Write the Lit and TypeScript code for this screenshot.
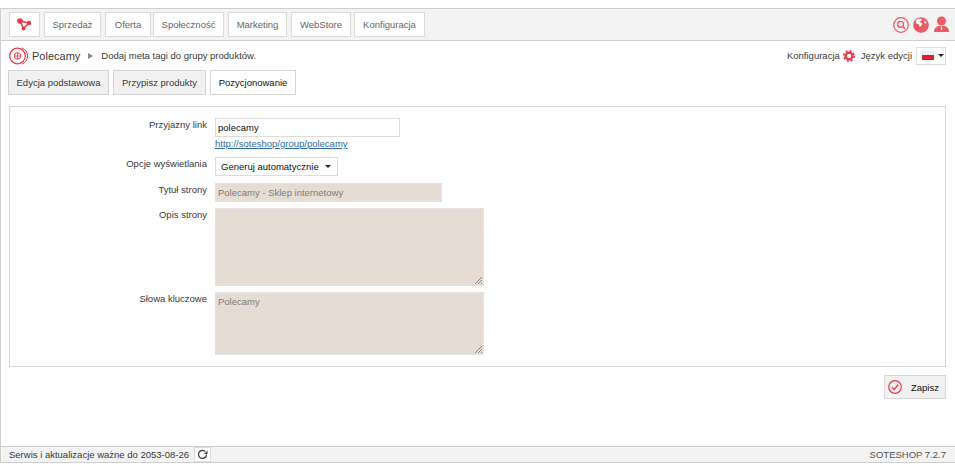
import { LitElement, html, css } from "lit";
import { customElement } from "lit/decorators.js";

const RED = "#e8394a";
const SOFT = "#ec5a66";

@customElement("app-root")
export class AppRoot extends LitElement {
  static styles = css`
    :host { display: block; width: 955px; height: 465px; background: #fff; font-family: "Liberation Sans", Arial, sans-serif; font-size: 9.5px; color: #3a3a3a; overflow: hidden; }
    * { box-sizing: border-box; }
    .frame { margin-top: 8px; height: 455px; display: flex; flex-direction: column; border-left: 1px solid #cfcfcf; border-top: 1px solid #cfcfcf; border-bottom: 1px solid #cfcfcf; }
    .top { height: 32px; flex: none; background: #f3f3f3; border-bottom: 1px solid #cfcfcf; display: flex; align-items: flex-start; padding: 3px 0 0 8px; }
    .nav { display: flex; }
    .nb { height: 25px; background: #fff; border: 1px solid #dcdcdc; display: flex; align-items: center; justify-content: center; color: #666; }
    .icons { margin-left: auto; display: flex; align-items: center; gap: 4px; padding: 4px 6px 0 0; }
    .crumb { height: 29px; flex: none; display: flex; align-items: center; padding: 0 9px 0 8px; }
    .crumb .title { font-size: 11px; color: #3a3a3a; margin-left: 2px; }
    .crumb .arrow { width: 0; height: 0; border-left: 5px solid #888; border-top: 3px solid transparent; border-bottom: 3px solid transparent; margin: 0 8px 0 8px; }
    .crumb .right { margin-left: auto; display: flex; align-items: center; }
    .flag { width: 30px; height: 18px; margin-left: 4px; border: 1px solid #ddd; background: #fff; display: flex; align-items: center; padding-left: 5px; gap: 4px; }
    .flag i { display: block; width: 12px; height: 9px; background: linear-gradient(#f0f0f0 45%, #dd2030 45%); }
    .caret { width: 0; height: 0; border: 3px solid transparent; border-top: 3px solid #222; border-bottom: 0; flex: none; }
    .tabs { display: flex; gap: 4px; padding-left: 7px; flex: none; height: 25px; }
    .tab { height: 25px; display: flex; align-items: center; justify-content: center; background: #f1f1f1; border: 1px solid #d5d5d5; color: #3a3a3a; }
    .tab.on { background: #fff; color: #111; }
    .panel { margin: 11px 9px 0 8px; height: 261px; flex: none; border: 1px solid #d5d5d5; padding-top: 11px; }
    .form { display: grid; grid-template-columns: 197px auto; column-gap: 8px; row-gap: 6px; justify-content: start; }
    .lab { text-align: right; color: #3a3a3a; line-height: 13px; }
    .stack { display: flex; flex-direction: column; align-items: flex-start; }
    .in { height: 19px; width: 185px; border: 1px solid #dcdcdc; background: #fff; color: #111; display: flex; align-items: center; padding-left: 2px; }
    .link { color: #2f6a9f; text-decoration: underline; line-height: 13px; margin-bottom: 1px; }
    .sel { height: 19px; width: 123px; border: 1px solid #dcdcdc; background: #fff; color: #111; display: flex; align-items: center; padding-left: 5px; gap: 6px; white-space: nowrap; margin-bottom: 1px; }
    .dis { background: #e5dcd3; border: 1px solid #e3e3e3; color: #808080; padding: 2px; position: relative; line-height: 14px; }
    .t1 { width: 227px; height: 19px; display: flex; align-items: center; }
    .t2 { width: 269px; height: 78px; }
    .t3 { width: 269px; height: 63px; }
    .grip { position: absolute; right: 0; bottom: 0; }
    .actions { display: flex; justify-content: flex-end; padding: 8px 9px 0 0; flex: none; }
    .save { width: 62px; height: 24px; background: #f1f1f1; border: 1px solid #d8d8d8; display: flex; align-items: center; padding-left: 2px; color: #111; gap: 8px; }
    .foot { margin-top: auto; height: 16px; flex: none; background: #f3f3f3; border-top: 1px solid #cfcfcf; display: flex; align-items: center; padding: 0 9px 0 8px; }
    .ref { width: 17px; height: 15px; background: #fff; border: 1px solid #dcdcdc; margin-left: 5px; display: flex; align-items: center; justify-content: center; }
    .ver { margin-left: auto; color: #555; }
  `;

  private grip() {
    return html`<svg class="grip" width="10" height="10" viewBox="0 0 10 10"><path d="M9 2 2 9M9 5 5 9M9 8 8 9" stroke="#888" fill="none"/></svg>`;
  }

  render() {
    const navs: [string, number, number][] = [["Sprzedaż", 57, 4], ["Oferta", 46, 4], ["Społeczność", 71, 2], ["Marketing", 59, 4], ["WebStore", 60, 4], ["Konfiguracja", 71, 3]];
    return html`<div class="frame">
      <div class="top">
        <div class="nav">
          <div class="nb" style="width:31px">
            <svg width="15" height="13" viewBox="0 0 15 13"><path d="M3 3 12 5 6.500 10.500Z" fill="none" stroke="${RED}" stroke-width="1.500"/><circle cx="3" cy="3" r="2.800" fill="${RED}"/><circle cx="12" cy="5" r="2.200" fill="${RED}"/><circle cx="6.500" cy="10.500" r="1.900" fill="${RED}"/></svg>
          </div>
          ${navs.map(([t, w, g]) => html`<div class="nb" style="width:${w}px;margin-left:${g}px">${t}</div>`)}
        </div>
        <div class="icons">
          <svg width="16" height="16" viewBox="0 0 16 16"><circle cx="8" cy="8" r="7.300" fill="none" stroke="${SOFT}" stroke-width="1.200"/><circle cx="7.500" cy="7.300" r="3" fill="none" stroke="${SOFT}" stroke-width="1.300"/><path d="M9.700 9.500 12 11.800" stroke="${SOFT}" stroke-width="1.700"/></svg>
          <svg width="16" height="16" viewBox="0 0 17 17"><circle cx="8.500" cy="8.500" r="8.300" fill="${SOFT}"/><path d="M5 2.500c2-1 4-.5 4.500.5-.5 1.500-2 1-2.500 2.500 1 .5 2.500 0 3 1.500-1 2-1.500 3-3 3.500-.5-1.500-.5-2.500-1.500-3-1.500 0-2.500-1-2.500-2.500S4 3 5 2.500ZM12 4c1 0 2 1 2.500 2.500-1 .5-2 .5-2.500 0-.5-1 0-1.500 0-2.500Z" fill="#fff"/></svg>
          <svg width="15" height="17" viewBox="0 0 15 17" style="margin-left:1px"><circle cx="7.500" cy="5" r="4.500" fill="${SOFT}"/><path d="M0 16c0-3.500 2.500-6 5-6h5c2.500 0 5 2.500 5 6Z" fill="${SOFT}"/><path d="M7.500 10.500v3.500" stroke="#fff" stroke-width="1.200"/></svg>
        </div>
      </div>
      <div class="crumb">
        <svg width="21" height="20" viewBox="0 0 21 20"><circle cx="8.500" cy="10" r="7.800" fill="none" stroke="${RED}" stroke-width="1.200"/><path d="M13 1.800c3.500 1.700 5.500 4.700 5.500 8.200s-2 6.500-5.500 8.200" fill="none" stroke="${RED}" stroke-width="1"/><circle cx="8.500" cy="10" r="3.300" fill="none" stroke="${RED}" stroke-width="1"/><path d="M5.500 10h6M8.500 7v6" stroke="${RED}" stroke-width=".8"/></svg>
        <span class="title">Polecamy</span><span class="arrow"></span><span>Dodaj meta tagi do grupy produktów.</span>
        <div class="right">
          <span>Konfiguracja</span>
          <svg width="12" height="12" viewBox="0 0 12 12" style="margin:0 6px 0 3px"><circle cx="6" cy="6" r="3.400" fill="none" stroke="${RED}" stroke-width="2.400"/><circle cx="6" cy="6" r="5.200" fill="none" stroke="${RED}" stroke-width="1.600" stroke-dasharray="2 2.080"/></svg>
          <span>Język edycji</span>
          <div class="flag"><i></i><span class="caret"></span></div>
        </div>
      </div>
      <div class="tabs">
        <div class="tab" style="width:101px">Edycja podstawowa</div>
        <div class="tab" style="width:93px">Przypisz produkty</div>
        <div class="tab on" style="width:86px">Pozycjonowanie</div>
      </div>
      <div class="panel">
        <div class="form">
          <div class="lab">Przyjazny link</div>
          <div class="stack"><div class="in">polecamy</div><span class="link">http://soteshop/group/polecamy</span></div>
          <div class="lab">Opcje wyświetlania</div>
          <div class="sel">Generuj automatycznie <span class="caret"></span></div>
          <div class="lab">Tytuł strony</div>
          <div class="dis t1">Polecamy - Sklep internetowy</div>
          <div class="lab">Opis strony</div>
          <div class="dis t2">${this.grip()}</div>
          <div class="lab">Słowa kluczowe</div>
          <div class="dis t3">Polecamy${this.grip()}</div>
        </div>
      </div>
      <div class="actions">
        <div class="save">
          <svg width="16" height="16" viewBox="0 0 16 16"><circle cx="8" cy="8" r="6.300" fill="none" stroke="${RED}" stroke-width="1.200"/><path d="M4.800 8.200 7 10.500 11.300 5.500" fill="none" stroke="${RED}" stroke-width="1.200"/></svg>
          <span>Zapisz</span>
        </div>
      </div>
      <div class="foot">
        <span>Serwis i aktualizacje ważne do 2053-08-26</span>
        <div class="ref"><svg width="11" height="11" viewBox="0 0 11 11"><path d="M9.500 5.500a4 4 0 1 1-1.300-3" fill="none" stroke="#444" stroke-width="1.300"/><path d="M10.500 1.500v3.500H7Z" fill="#444"/></svg></div>
        <span class="ver">SOTESHOP 7.2.7</span>
      </div>
    </div>`;
  }
}
